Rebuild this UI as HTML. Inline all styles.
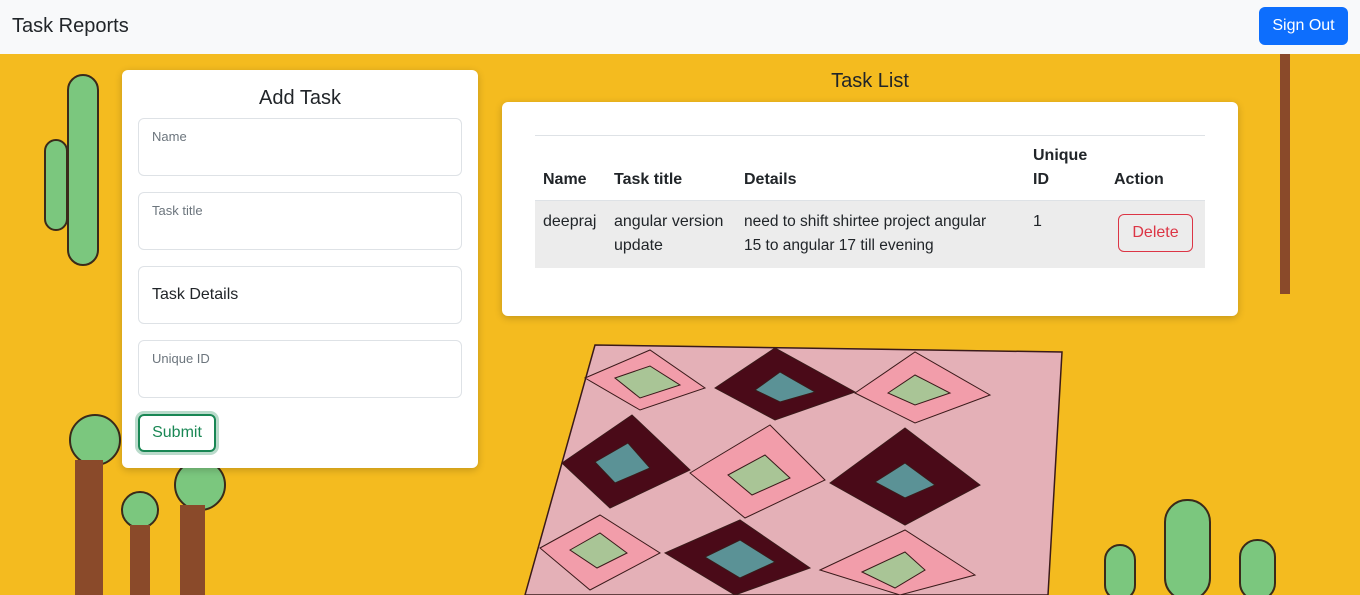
<!DOCTYPE html>
<html><head><style>
body{margin:0;width:1360px;height:595px;overflow:hidden;font-family:"Liberation Sans",sans-serif;background:#f4bb1f;position:relative}
.nav{position:absolute;left:0;top:0;width:1360px;height:54px;background:#f8f9fa}
.brand{position:absolute;left:12px;top:15px;font-size:20px;color:#212529}
.so{position:absolute;left:1259px;top:7px;width:89px;height:38px;background:#0d6efd;color:#fff;border-radius:6px;font-size:16px;line-height:38px;text-align:center}
.card{position:absolute;background:#fff;border-radius:6px;box-shadow:0 2px 8px rgba(0,0,0,.2)}
.inp{position:absolute;left:16px;width:324px;height:58px;border:1px solid #dee2e6;border-radius:6px;box-sizing:border-box}
.inp span{position:absolute;left:13px;top:10px;font-size:13px;color:#6c757d}
.t{position:absolute;font-size:16px;line-height:24px;color:#212529}
.b{font-weight:bold}
</style></head><body>
<svg width="1360" height="595" style="position:absolute;left:0;top:0">
<polygon points="595,345 1062,352 1048,595 525,595" fill="#e4b0b7" stroke="#3a1a1a" stroke-width="1.5"/>
<g stroke="#3a1a1a" stroke-width="1">
<polygon points="585,378 650,350 705,388 640,410" fill="#f29daa"/>
<polygon points="615,378 650,366 680,385 640,398" fill="#a9c596"/>
<polygon points="715,388 775,348 855,392 775,420" fill="#4a0a18"/>
<polygon points="755,390 780,372 815,392 780,402" fill="#5b9296"/>
<polygon points="855,393 915,352 990,395 915,423" fill="#f29daa"/>
<polygon points="888,393 915,375 950,393 915,405" fill="#a9c596"/>
<polygon points="562,463 632,415 690,470 610,508" fill="#4a0a18"/>
<polygon points="595,462 628,443 650,468 615,483" fill="#5b9296"/>
<polygon points="690,473 770,425 825,480 745,518" fill="#f29daa"/>
<polygon points="728,475 765,455 790,478 752,495" fill="#a9c596"/>
<polygon points="830,483 905,428 980,485 905,525" fill="#4a0a18"/>
<polygon points="875,482 905,463 935,485 905,498" fill="#5b9296"/>
<polygon points="540,548 600,515 660,553 590,590" fill="#f29daa"/>
<polygon points="570,550 600,533 627,553 597,568" fill="#a9c596"/>
<polygon points="665,553 740,520 810,568 735,595" fill="#4a0a18"/>
<polygon points="705,557 740,540 775,562 740,578" fill="#5b9296"/>
<polygon points="820,570 905,530 975,575 900,595" fill="#f29daa"/>
<polygon points="862,572 905,552 925,570 895,588" fill="#a9c596"/>
</g>
<g fill="#7bc77e" stroke="#3a2a1a" stroke-width="2">
<rect x="68" y="75" width="30" height="190" rx="15"/>
<rect x="45" y="140" width="22" height="90" rx="11"/>
<rect x="1165" y="500" width="45" height="100" rx="22"/>
<rect x="1240" y="540" width="35" height="60" rx="17"/>
<rect x="1105" y="545" width="30" height="55" rx="15"/>
<circle cx="95" cy="440" r="25"/><circle cx="200" cy="485" r="25"/><circle cx="140" cy="510" r="18"/>
</g>
<g fill="#8a4a2a"><rect x="75" y="460" width="28" height="135"/><rect x="130" y="525" width="20" height="70"/><rect x="180" y="505" width="25" height="90"/><rect x="1280" y="54" width="10" height="240"/></g>
</svg>
<div class="nav"><div class="brand">Task Reports</div><div class="so">Sign Out</div></div>
<div class="card" style="left:122px;top:70px;width:356px;height:398px">
<div style="position:absolute;top:17px;width:100%;text-align:center;font-size:20px;color:#212529">Add Task</div>
<div class="inp" style="top:48px"><span>Name</span></div>
<div class="inp" style="top:122px"><span>Task title</span></div>
<div class="inp" style="top:196px"><span style="top:19px;font-size:16px;color:#212529">Task Details</span></div>
<div class="inp" style="top:270px"><span>Unique ID</span></div>
<div style="position:absolute;left:16px;top:344px;width:78px;height:38px;border:2px solid #198754;box-shadow:0 0 0 3px rgba(25,135,84,.3);border-radius:6px;box-sizing:border-box;color:#198754;font-size:16px;line-height:34px;text-align:center">Submit</div>
</div>
<div style="position:absolute;left:502px;top:70px;width:736px;text-align:center;font-size:20px;color:#212529">Task List</div>
<div class="card" style="left:502px;top:102px;width:736px;height:214px">
<div style="position:absolute;left:33px;top:33px;width:670px;height:1px;background:#dee2e6"></div>
<div style="position:absolute;left:33px;top:98px;width:670px;height:67px;background:#ececec;border-top:1px solid #dee2e6"></div>
<div class="t b" style="left:41px;top:66px">Name</div>
<div class="t b" style="left:112px;top:66px">Task title</div>
<div class="t b" style="left:242px;top:66px">Details</div>
<div class="t b" style="left:531px;top:42px">Unique<br>ID</div>
<div class="t b" style="left:612px;top:66px">Action</div>
<div class="t" style="left:41px;top:108px">deepraj</div>
<div class="t" style="left:112px;top:108px">angular version<br>update</div>
<div class="t" style="left:242px;top:108px;font-size:15.5px">need to shift shirtee project angular<br>15 to angular 17 till evening</div>
<div class="t" style="left:531px;top:108px">1</div>
<div style="position:absolute;left:616px;top:112px;width:75px;height:38px;box-sizing:border-box;border:1px solid #dc3545;border-radius:6px;color:#dc3545;line-height:36px;text-align:center;font-size:16px">Delete</div>
</div>
</body></html>
